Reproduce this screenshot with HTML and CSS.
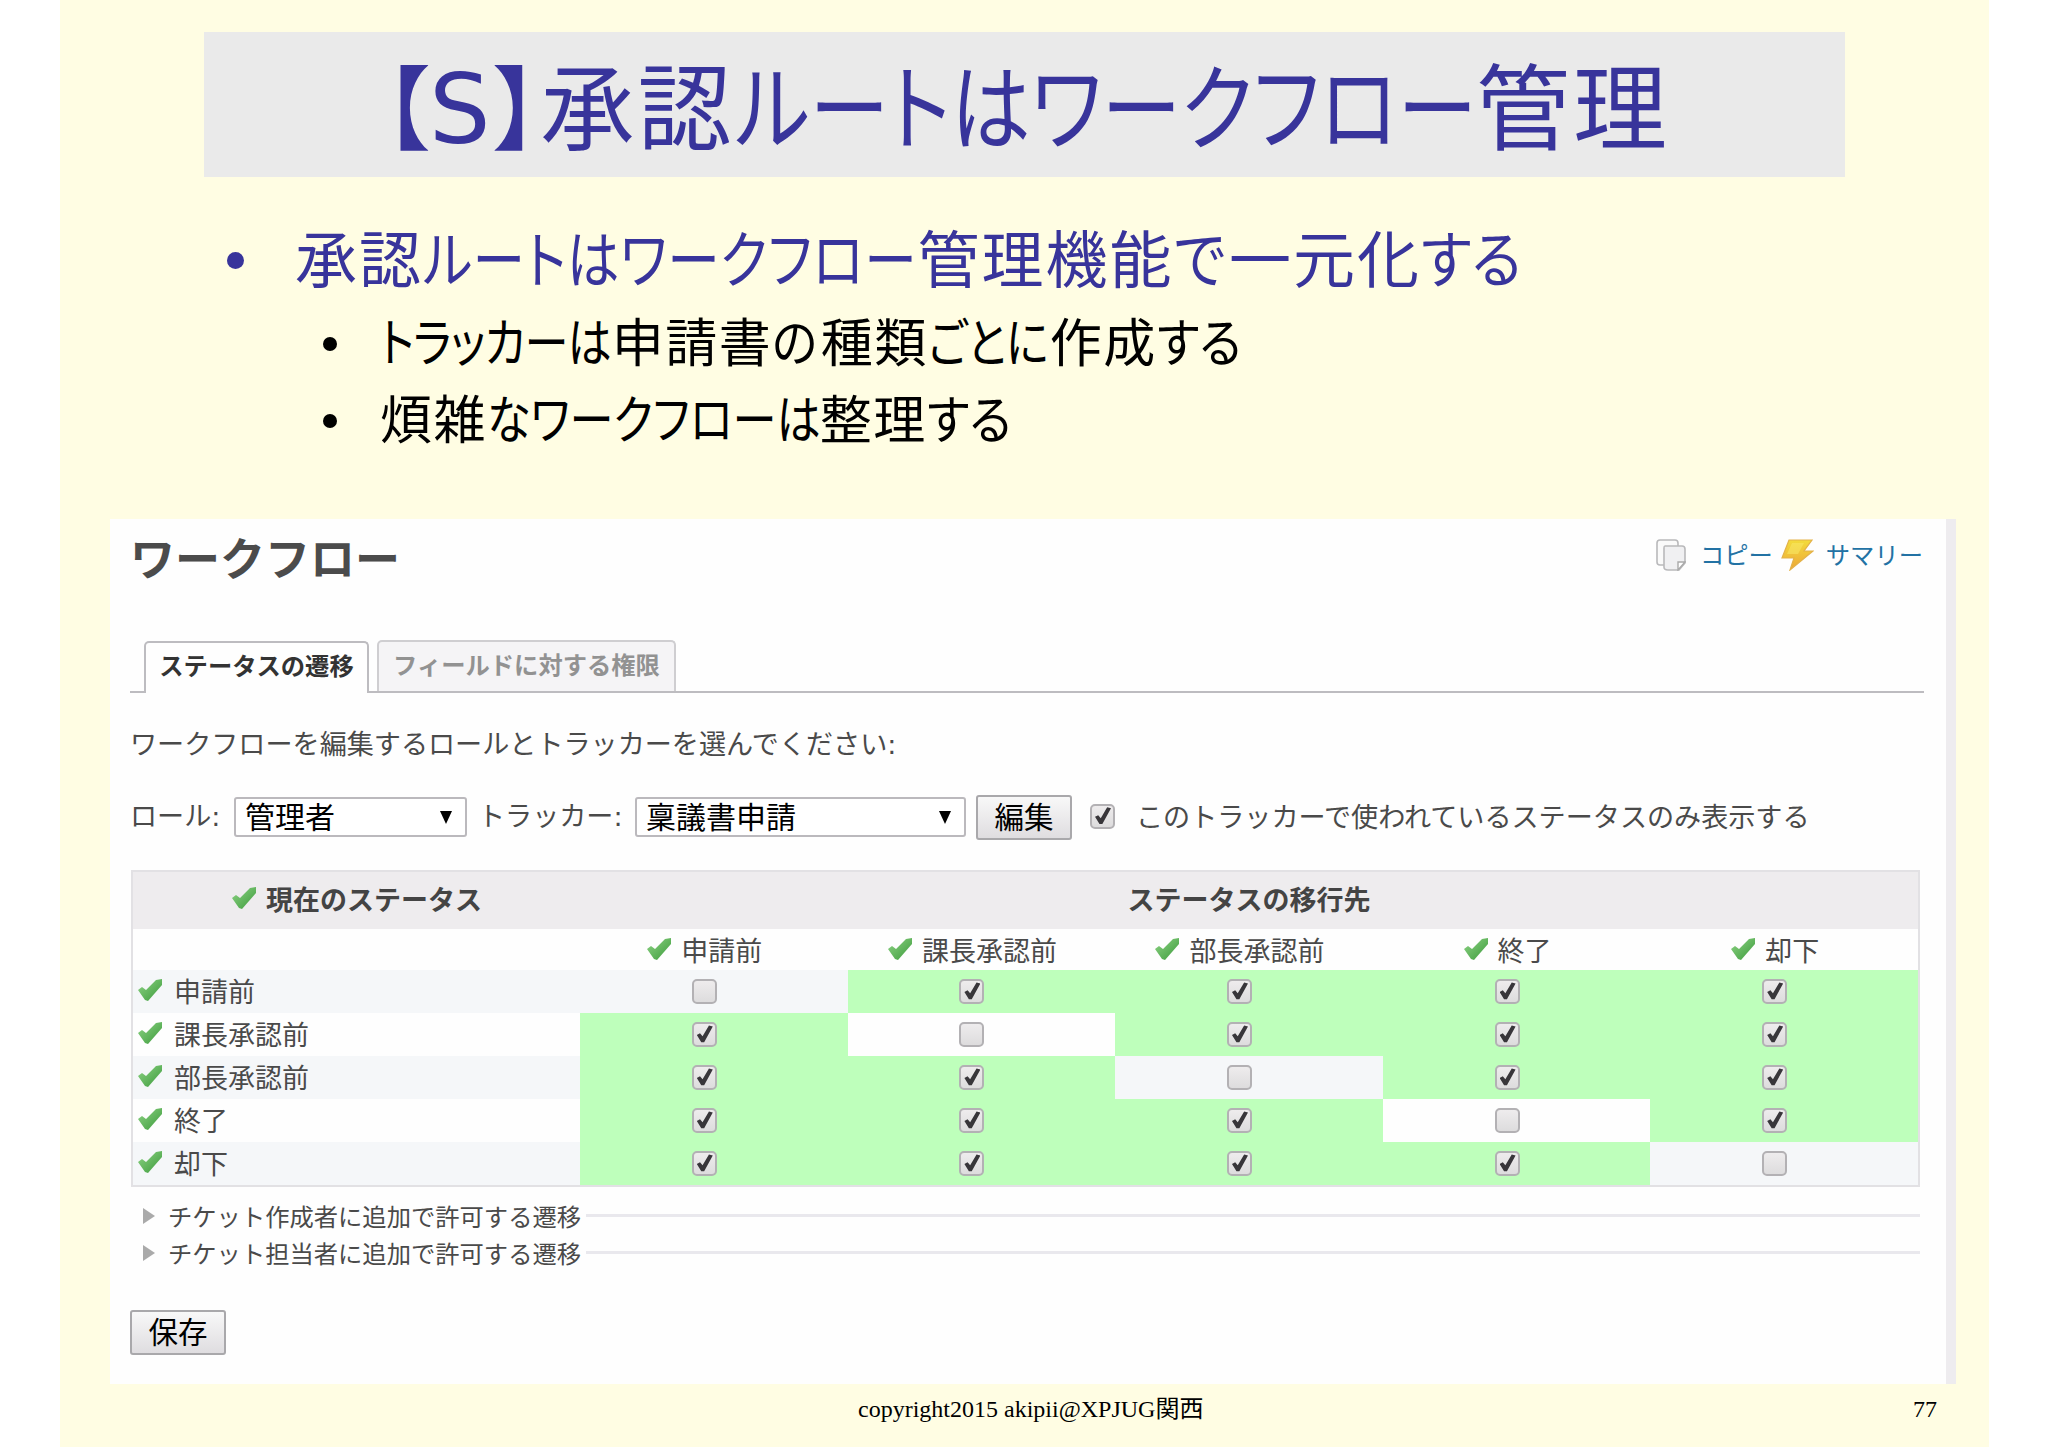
FILE: index.html
```html
<!DOCTYPE html>
<html lang="ja">
<head>
  <meta charset="UTF-8" />
  <title>【S】承認ルートはワークフロー管理</title>
  <link rel="stylesheet" href="styles.css">
</head>
<body>

<svg width="0" height="0" class="defs">
  <defs>
    <linearGradient id="green" x1="0" y1="0" x2="1" y2="1">
      <stop offset="0" stop-color="#8fd486"/>
      <stop offset="1" stop-color="#3b9a3a"/>
    </linearGradient>
    <linearGradient id="gold" x1="0" y1="0" x2="0" y2="1">
      <stop offset="0" stop-color="#f3dc3c"/>
      <stop offset="1" stop-color="#eda637"/>
    </linearGradient>
    <symbol id="tick" viewBox="0 0 26 22">
      <path d="M1 11 L5 8 L9 11 L19 1 L25 0 L25 6 L11 22 L8 21 Z" fill="url(#green)"/>
    </symbol>
  </defs>
</svg>

<div class="slide">
  <h1 class="title"><span class="bracket">【<span class="latin">S</span>】</span>承認<span class="kana k10">ルートはワークフロー</span>管理</h1>

  <ul class="points">
    <li class="main">承認<span class="kana k10">ルートはワークフロー</span>管理機能<span class="kana k1">で</span>一元化<span class="kana k2">する</span></li>
    <li class="sub"><span class="kana k6">トラッカーは</span>申請書<span class="kana k1">の</span>種類<span class="kana k3">ごとに</span>作成<span class="kana k2">する</span></li>
    <li class="sub">煩雑<span class="kana k8">なワークフローは</span>整理<span class="kana k2">する</span></li>
  </ul>

  <div class="panel">
    <div class="head">
      <h2>ワークフロー</h2>
      <div class="links">
        <svg class="copy" width="30" height="32" viewBox="0 0 30 32">
          <rect x="1" y="1" width="21" height="25" rx="3" fill="#fafafa" stroke="#b9b9bb" stroke-width="1.6"/>
          <path d="M9 7 H26 Q29 7 29 10 V24 L23 31 H12 Q8 31 8 28 V9 Q8 7 9 7 Z" fill="#f0f0f2" stroke="#b9b9bb" stroke-width="1.6"/>
          <path d="M29 23 H22 V31 Z" fill="#fff" stroke="#aaa" stroke-width="1.4"/>
        </svg>
        <a>コピー</a>
        <svg class="bolt" width="33" height="32" viewBox="0 0 33 32">
          <path d="M8 1 H31 L23 12 H32 L9 31 L13 19 H1 Z" fill="url(#gold)" stroke="#e3b24a" stroke-width="1.2"/>
          <path d="M11 4 H23 L17 15 H6 Z" fill="#f8e664" opacity=".6"/>
        </svg>
        <a>サマリー</a>
      </div>
    </div>

    <div class="tabs">
      <div class="tab selected">ステータスの遷移</div>
      <div class="tab">フィールドに対する権限</div>
    </div>

    <p class="guide">ワークフローを編集するロールとトラッカーを選んでください<span class="latin">:</span></p>

    <div class="filter">
      <span class="role">ロール<span class="latin">:</span></span>
      <div class="select role-select">管理者<i class="arrow"></i></div>
      <span class="tracker">トラッカー<span class="latin">:</span></span>
      <div class="select tracker-select">稟議書申請<i class="arrow"></i></div>
      <div class="button">編集</div>
      <i class="check on"></i>
      <span class="used">このトラッカーで使われているステータスのみ表示する</span>
    </div>

    <table class="workflow">
      <thead>
        <tr>
          <th class="status"><svg class="tick"><use href="#tick"/></svg>現在のステータス</th>
          <th colspan="5">ステータスの移行先</th>
        </tr>
        <tr class="names">
          <td></td>
          <td><svg class="tick"><use href="#tick"/></svg>申請前</td>
          <td><svg class="tick"><use href="#tick"/></svg>課長承認前</td>
          <td><svg class="tick"><use href="#tick"/></svg>部長承認前</td>
          <td><svg class="tick"><use href="#tick"/></svg>終了</td>
          <td><svg class="tick"><use href="#tick"/></svg>却下</td>
        </tr>
      </thead>
      <tbody>
        <tr>
          <td class="name"><svg class="tick"><use href="#tick"/></svg>申請前</td>
          <td><i class="check"></i></td>
          <td class="enabled"><i class="check on"></i></td>
          <td class="enabled"><i class="check on"></i></td>
          <td class="enabled"><i class="check on"></i></td>
          <td class="enabled"><i class="check on"></i></td>
        </tr>
        <tr>
          <td class="name"><svg class="tick"><use href="#tick"/></svg>課長承認前</td>
          <td class="enabled"><i class="check on"></i></td>
          <td><i class="check"></i></td>
          <td class="enabled"><i class="check on"></i></td>
          <td class="enabled"><i class="check on"></i></td>
          <td class="enabled"><i class="check on"></i></td>
        </tr>
        <tr>
          <td class="name"><svg class="tick"><use href="#tick"/></svg>部長承認前</td>
          <td class="enabled"><i class="check on"></i></td>
          <td class="enabled"><i class="check on"></i></td>
          <td><i class="check"></i></td>
          <td class="enabled"><i class="check on"></i></td>
          <td class="enabled"><i class="check on"></i></td>
        </tr>
        <tr>
          <td class="name"><svg class="tick"><use href="#tick"/></svg>終了</td>
          <td class="enabled"><i class="check on"></i></td>
          <td class="enabled"><i class="check on"></i></td>
          <td class="enabled"><i class="check on"></i></td>
          <td><i class="check"></i></td>
          <td class="enabled"><i class="check on"></i></td>
        </tr>
        <tr>
          <td class="name"><svg class="tick"><use href="#tick"/></svg>却下</td>
          <td class="enabled"><i class="check on"></i></td>
          <td class="enabled"><i class="check on"></i></td>
          <td class="enabled"><i class="check on"></i></td>
          <td class="enabled"><i class="check on"></i></td>
          <td><i class="check"></i></td>
        </tr>
      </tbody>
    </table>

    <div class="extra">
      <div class="legend"><i class="closed"></i>チケット作成者に追加で許可する遷移</div>
      <div class="legend"><i class="closed"></i>チケット担当者に追加で許可する遷移</div>
    </div>

    <div class="button save">保存</div>
  </div>

  <div class="footer">
    <span class="copyright">copyright2015 akipii@XPJUG関西</span>
    <span>77</span>
  </div>
</div>

</body>
</html>
```

FILE: styles.css
```css
* {
  box-sizing: border-box;
}
body {
  margin: 0;
  background: #fff;
  font-family: "Noto Sans CJK JP", sans-serif;
  color: #4a4a4a;
  overflow: hidden;
}
.defs {
  position: absolute;
}
.slide {
  width: 1929px;
  height: 1447px;
  margin-left: 60px;
  padding-top: 32px;
  background: #fffde3;
}
.latin {
  font-family: "DejaVu Sans", sans-serif;
}

/* slide heading and bullets */
.title {
  width: 1641px;
  height: 145px;
  margin: 0 0 0 144px;
  padding-left: 179px;
  background: #eaeaea;
  color: #38349b;
  font-size: 94px;
  font-weight: 400;
  line-height: 140px;
  letter-spacing: 3px;
  white-space: nowrap;
}
/* condensed kana, the margin takes back the width lost by scaling */
.kana {
  display: inline-block;
  font-feature-settings: "palt";
  letter-spacing: 0;
  transform: scaleX(0.85);
  transform-origin: left;
}
.k1 {
  margin-right: -0.03em;
  transform: scaleX(0.9);
}
.k2 {
  margin-right: -0.26em;
  transform: scaleX(0.9);
}
.k3 {
  margin-right: -0.38em;
}
.k6 {
  letter-spacing: -0.018em;
  margin-right: -0.77em;
}
.k8 {
  margin-right: -1.15em;
}
.k10 {
  letter-spacing: 0.003em;
  margin-right: -1.4em;
}
.points .k10 {
  letter-spacing: 0.012em;
}
.bracket {
  font-size: 92px;
  font-feature-settings: "palt";
  letter-spacing: 0;
  margin-right: 1px;
}
.bracket .latin {
  font-size: 97px;
  line-height: 1;
  letter-spacing: 3px;
}
.points {
  height: 342px;
  margin: 0;
  padding: 40px 0 0 0;
  list-style: none;
  white-space: nowrap;
}
.points li {
  display: flex;
  align-items: center;
}
.points li::before {
  content: "";
  border-radius: 50%;
  background: currentColor;
}
.points .main {
  height: 85px;
  padding: 0 0 8px 167px;
  color: #38349b;
  font-size: 62px;
  letter-spacing: 2px;
}
.points .main::before {
  width: 17px;
  height: 17px;
  margin: 10px 51px 0 0;
}
.points .sub {
  height: 77px;
  padding: 0 0 3px 263px;
  color: #000;
  font-size: 52px;
  letter-spacing: 1.5px;
}
.points .sub::before {
  width: 14px;
  height: 14px;
  margin: 9px 43px 0 0;
}

/* workflow screen */
.panel {
  width: 1846px;
  height: 865px;
  margin-left: 50px;
  padding: 0 22px 0 20px;
  background: #fefefe;
  border-right: 10px solid #eeecef;
}
.head {
  display: flex;
  justify-content: space-between;
  height: 122px;
}
h2 {
  margin: 6px 0 0;
  color: #4b4b4b;
  font-size: 45px;
  line-height: 64px;
}
.links {
  display: flex;
  height: 32px;
  margin: 20px 1px 0 0;
  color: #2272a4;
  font-size: 24.3px;
  line-height: 30px;
}
.copy {
  margin-right: 14px;
}
.bolt {
  margin: 0 12px 0 8px;
}
.tabs {
  display: flex;
  align-items: flex-end;
  gap: 8px;
  height: 52px;
  padding-left: 14px;
  border-bottom: 2px solid #bdbcc0;
}
.tab {
  height: 51px;
  width: 299px;
  border: 2px solid #cfced1;
  border-bottom: 0;
  border-radius: 5px 5px 0 0;
  background: #f5f4f6;
  color: #929292;
  font-size: 24.3px;
  font-weight: 700;
  line-height: 44px;
  text-align: center;
}
.tab.selected {
  width: 225px;
  height: 52px;
  margin-bottom: -2px;
  padding-bottom: 2px;
  background: #fefefe;
  border-color: #bdbcc0;
  color: #333;
}
.guide {
  margin: 30px 0 0;
  font-size: 27.1px;
  line-height: 40px;
}
.filter {
  display: flex;
  align-items: center;
  height: 44px;
  margin-top: 30px;
  font-size: 27.1px;
  line-height: 40px;
  white-space: nowrap;
}
.filter span {
  margin-top: -2px;
}
.role {
  width: 104px;
}
.tracker {
  width: 157px;
}
.select {
  display: flex;
  align-items: center;
  justify-content: space-between;
  height: 40px;
  padding: 0 13px 4px 9px;
  border: 2px solid #bbb9bd;
  border-radius: 3px;
  background: #fff;
  color: #000;
  font-size: 30px;
  line-height: 32px;
}
.role-select {
  width: 233px;
  margin-right: 11px;
}
.tracker-select {
  width: 331px;
  margin-right: 10px;
}
.arrow {
  margin-top: 4px;
  border: 6px solid transparent;
  border-top: 13px solid #000;
  border-bottom: 0;
}
.button {
  width: 96px;
  height: 45px;
  border: 2px solid #a9a8ab;
  border-radius: 3px;
  background: linear-gradient(#f8f8f8, #dfdde0);
  color: #000;
  font-size: 29.5px;
  line-height: 36px;
  text-align: center;
}
.check {
  display: inline-block;
  position: relative;
  width: 25px;
  height: 25px;
  border: 2px solid #b3b1b4;
  border-radius: 5px;
  background: linear-gradient(#eeeced, #dddcdd);
  vertical-align: middle;
}
.check.on::after {
  content: "";
  position: absolute;
  left: 3px;
  top: 1px;
  width: 16px;
  height: 18px;
  background: #38363a;
  clip-path: polygon(0 57%, 20% 48%, 36% 65%, 76% 4%, 100% 10%, 46% 97%, 28% 97%);
}
.filter .check {
  margin: -2px 21px 0 18px;
}

/* transitions table */
.workflow {
  width: 1789px;
  margin: 31px 0 0 1px;
  border: 2px solid #e2e1e4;
  border-spacing: 0;
  table-layout: fixed;
  font-size: 27px;
  line-height: 36px;
}
.workflow th {
  height: 57px;
  padding: 0 0 4px;
  background: #eeecee;
  color: #444;
}
.workflow .status {
  width: 447px;
}
.workflow td {
  height: 43px;
  padding: 0 19px 2px 0;
  text-align: center;
  white-space: nowrap;
}
.workflow .names td {
  height: 41px;
  padding-bottom: 0;
}
.workflow .name {
  padding-left: 4px;
  text-align: left;
}
.workflow tbody tr:nth-child(odd) {
  background: #f5f7f9;
}
.workflow .enabled {
  background: #beffbb;
}
.workflow .check {
  margin-top: -6px;
}
.tick {
  width: 26px;
  height: 22px;
  margin-right: 9px;
  vertical-align: 1px;
}
.name .tick {
  margin-right: 11px;
}

.extra {
  margin: 10px 0 0 13px;
  font-size: 24.3px;
}
.legend {
  display: flex;
  align-items: center;
  width: 1777px;
  height: 37px;
  white-space: nowrap;
}
.legend::after {
  content: "";
  flex: 1;
  height: 3px;
  margin-left: 5px;
  background: #e9e8ed;
}
.closed {
  margin-right: 13px;
  border: 8px solid transparent;
  border-left: 12px solid #aaa;
  border-right: 0;
}
.save {
  margin-top: 39px;
}

.footer {
  display: flex;
  justify-content: space-between;
  padding: 7px 52px 0 798px;
  color: #000;
  font-family: "Liberation Serif", "Noto Sans CJK JP", serif;
  font-size: 24px;
  line-height: 36px;
}
```
